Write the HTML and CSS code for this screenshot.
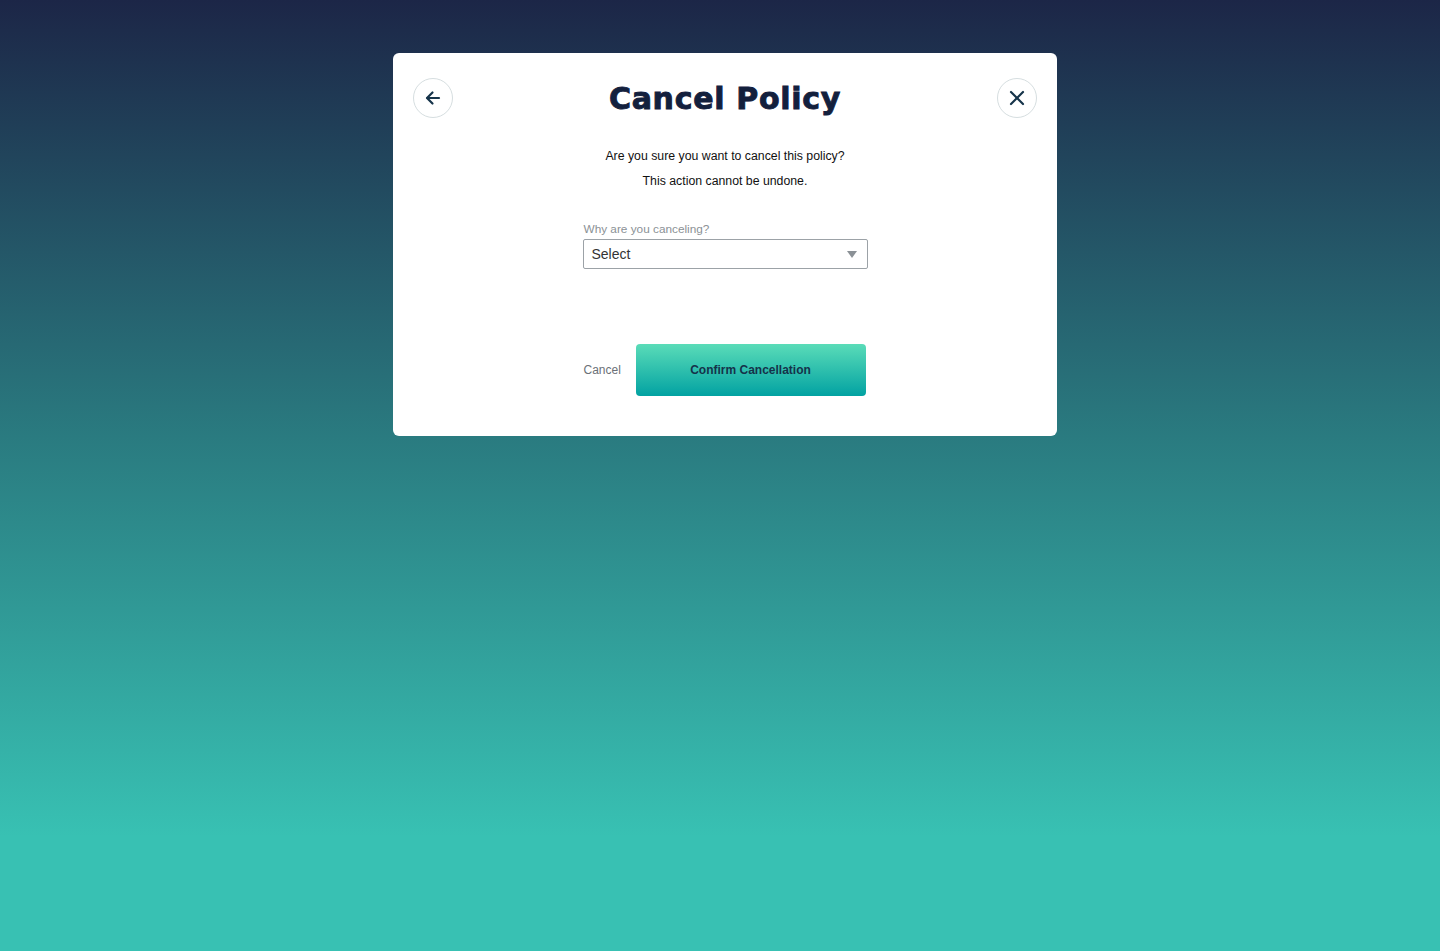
FILE: index.html
```html
<!DOCTYPE html>
<html lang="en">
<head>
    <meta charset="UTF-8">
    <meta name="viewport" content="width=device-width, initial-scale=1.0">
    <title>Cancel Policy</title>
    <link rel="stylesheet" href="styles.css">
</head>
<body>
    <div class="modal">
        <div class="modal-header">
            <button class="icon-btn" aria-label="Back">
                <svg width="18" height="18" viewBox="0 0 18 18" fill="none" stroke="#16344a" stroke-width="2.2" stroke-linecap="round" stroke-linejoin="round">
                    <path d="M15 9H3.5"/>
                    <path d="M8.5 3.5L3 9l5.5 5.5"/>
                </svg>
            </button>
            <h1>Cancel Policy</h1>
            <button class="icon-btn" aria-label="Close">
                <svg width="18" height="18" viewBox="0 0 18 18" fill="none" stroke="#16344a" stroke-width="2.2" stroke-linecap="round">
                    <path d="M3 3l12 12"/>
                    <path d="M15 3L3 15"/>
                </svg>
            </button>
        </div>

        <p class="message">Are you sure you want to cancel this policy?</p>
        <p class="message">This action cannot be undone.</p>

        <div class="field">
            <label for="reason">Why are you canceling?</label>
            <div class="select">
                <span id="reason">Select</span>
                <span class="caret"></span>
            </div>
        </div>

        <div class="actions">
            <button class="link-btn">Cancel</button>
            <button class="confirm-btn">Confirm Cancellation</button>
        </div>
    </div>
</body>
</html>
```

FILE: styles.css
```css
body {
    margin: 0;
    min-height: 951px;
    font-family: "Liberation Sans", Arial, sans-serif;
    background: linear-gradient(180deg, #1c2647 0%, #2a7b80 46%, #38c1b3 88%, #38c1b3 100%);
    padding: 53px 0 0 10px;
    box-sizing: border-box;
}
.modal {
    width: 664px;
    height: 383px;
    margin: 0 auto;
    background: white;
    border-radius: 6px;
    box-sizing: border-box;
    padding: 25px 20px 0;
    display: flex;
    flex-direction: column;
    align-items: center;
}
.modal-header {
    width: 100%;
    display: flex;
    align-items: center;
    justify-content: space-between;
    height: 40px;
}
h1 {
    margin: 0;
    font-family: "DejaVu Sans", sans-serif;
    font-weight: bold;
    font-size: 30px;
    letter-spacing: 0.7px;
    color: #13203d;
    -webkit-text-stroke: 0.9px #13203d;
}
.icon-btn {
    width: 40px;
    height: 40px;
    border-radius: 50%;
    border: 1px solid #d6dee0;
    background: white;
    padding: 0;
    display: flex;
    align-items: center;
    justify-content: center;
    cursor: pointer;
}
.message {
    margin: 0;
    font-size: 12.3px;
    line-height: 25px;
    color: #111;
}
.modal-header + .message {
    margin-top: 26px;
}
.field {
    width: 285px;
    margin-top: 28px;
}
label {
    display: block;
    font-size: 11.8px;
    color: #8b9196;
    margin-left: 1px;
    line-height: 15px;
    margin-bottom: 2px;
}
.select {
    height: 30px;
    border: 1px solid #9ca2a7;
    border-radius: 2px;
    box-sizing: border-box;
    display: flex;
    align-items: center;
    justify-content: space-between;
    padding: 0 10px 0 8px;
    font-size: 14px;
    color: #333;
}
.caret {
    width: 0;
    height: 0;
    border-left: 5px solid transparent;
    border-right: 5px solid transparent;
    border-top: 7px solid #8b9196;
}
.actions {
    width: 285px;
    margin-top: 75px;
    display: flex;
    align-items: center;
    justify-content: space-between;
    padding: 0 2px 0 1px;
    box-sizing: border-box;
}
.link-btn {
    background: none;
    border: none;
    padding: 0;
    font-family: "Liberation Sans", Arial, sans-serif;
    font-size: 12px;
    color: #6b7177;
    cursor: pointer;
}
.confirm-btn {
    width: 230px;
    height: 52px;
    border: none;
    border-radius: 4px;
    background: linear-gradient(180deg, #5adcb8 0%, #02a2a2 100%);
    font-family: "Liberation Sans", Arial, sans-serif;
    font-weight: bold;
    font-size: 12px;
    color: #15324a;
    cursor: pointer;
}
```
